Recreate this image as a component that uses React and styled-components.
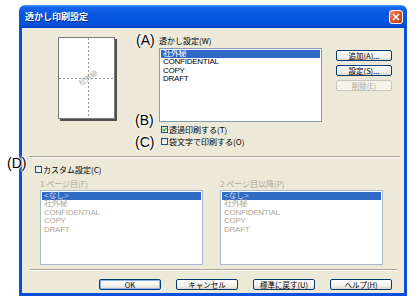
import React from "react";
import styled, { createGlobalStyle } from "styled-components";

const GlobalStyle = createGlobalStyle`
    body {
        margin: 0;
        background: #ffffff;
        font-family: "Liberation Sans", "Noto Sans CJK JP", sans-serif;
    }
`

const Window = styled.div`
    position: relative;
    margin: 5px 0 0 19px;
    width: 388px;
    height: 291px;
    display: flex;
    flex-direction: column;
`

const TitleBar = styled.div`
    height: 23px;
    flex: none;
    box-sizing: border-box;
    border-radius: 6px 6px 0 0;
    padding: 0 4px 0 6px;
    display: flex;
    align-items: center;
    justify-content: space-between;
    background: linear-gradient(to bottom, #4a96f8 0%, #1466ea 10%, #0757e0 40%, #0553dc 80%, #0443c4 100%);
    color: #ffffff;
    font-family: "Noto Sans CJK JP", sans-serif;
    font-size: 9px;
    font-weight: bold;
    text-shadow: 1px 1px 0 #0a2a8a;
`

const CloseButton = styled.div`
    width: 14px;
    height: 14px;
    box-sizing: border-box;
    border: 1px solid #ffffff;
    border-radius: 3px;
    background: linear-gradient(135deg, #f0906c 0%, #e3552b 45%, #c73a12 100%);
    display: flex;
    align-items: center;
    justify-content: center;
`

const Body = styled.div`
    flex: 1;
    display: flex;
    flex-direction: column;
    background: #ece9d8;
    border: 3px solid #0b4fdc;
    border-top: 0;
`

const Upper = styled.div`
    display: flex;
    padding: 7px 0 0 36px;
    height: 120px;
    box-sizing: border-box;
`

const Page = styled.div`
    width: 57px;
    height: 82px;
    margin-top: 2px;
    box-sizing: border-box;
    background: #ffffff;
    border: 1px solid #7a7a7a;
    box-shadow: 2px 2px 0 #505050;
    flex: none;
`

const Column = styled.div`
    display: flex;
    flex-direction: column;
    width: ${(p) => p.width || 163}px;
    margin-left: ${(p) => p.gap || 0}px;
`

const Label = styled.div`
    height: 12px;
    line-height: 12px;
    font-size: 8px;
    white-space: nowrap;
    color: ${(p) => (p.disabled ? "#aca899" : "#000000")};
    font-family: "Noto Sans CJK JP", sans-serif;
`

const ListBox = styled.div`
    height: ${(p) => p.h}px;
    box-sizing: border-box;
    border: 1px solid ${(p) => (p.disabled ? "#a7bad0" : "#7f9db9")};
    background: #ffffff;
    padding: 1px;
    overflow: hidden;
`

const Item = styled.div`
    height: 8.4px;
    line-height: 8.4px;
    font-size: 8px;
    letter-spacing: -0.25px;
    padding-left: 2px;
    white-space: nowrap;
    background: ${(p) => (p.selected ? "#316ac5" : "transparent")};
    color: ${(p) => (p.selected ? (p.disabled ? "#c9d6ee" : "#ffffff") : p.disabled ? "#aca899" : "#000000")};
`

const CheckRow = styled.label`
    display: flex;
    align-items: center;
    height: 12px;
    gap: 1px;
    font-size: 8px;
    font-family: "Noto Sans CJK JP", sans-serif;
    white-space: nowrap;
`

const CheckBox = styled.span`
    width: 7px;
    height: 7px;
    box-sizing: border-box;
    border: 1px solid #1c5180;
    background: linear-gradient(135deg, #dcdcd7 0%, #ffffff 100%);
    display: flex;
    align-items: center;
    justify-content: center;
    margin-left: ${(p) => p.offset || 0}px;
`

const ButtonColumn = styled.div`
    display: flex;
    flex-direction: column;
    gap: 4px;
    margin-left: 14px;
    padding-top: 15px;
`

const Button = styled.div`
    width: ${(p) => p.w}px;
    height: 11px;
    box-sizing: border-box;
    border: 1px solid ${(p) => (p.disabled ? "#c9c7ba" : "#003c74")};
    border-radius: 2px;
    background: ${(p) => (p.disabled ? "#f5f4ea" : "linear-gradient(to bottom, #ffffff 0%, #f4f3ee 60%, #dcd8cc 100%)")};
    box-shadow: ${(p) => (p.focus ? "inset 0 0 0 1px #8cb4f2" : "none")};
    color: ${(p) => (p.disabled ? "#aca899" : "#000000")};
    font-size: 7.5px;
    font-family: "Noto Sans CJK JP", sans-serif;
    display: flex;
    align-items: center;
    justify-content: center;
    white-space: nowrap;
`

const Separator = styled.div`
    margin: ${(p) => p.m};
    border-top: 1px solid #aca899;
    border-bottom: 1px solid #ffffff;
`

const Lower = styled.div`
    display: flex;
    flex-direction: column;
    padding-left: 13px;
    margin-top: 5px;
`

const ListsRow = styled.div`
    display: flex;
    gap: 17px;
    padding-left: 5px;
    margin-top: 3px;
`

const ButtonRow = styled.div`
    display: flex;
    justify-content: flex-end;
    gap: 15px;
    padding-right: 12px;
    margin-top: 8px;
`

const Mark = styled.div`
    position: absolute;
    left: ${(p) => p.x}px;
    top: ${(p) => p.y}px;
    font-family: "Liberation Sans", sans-serif;
    font-size: 14px;
    line-height: 14px;
    color: #000000;
    text-shadow: 0 0 2px #fff, 0 0 2px #fff, 0 0 3px #fff, 0 0 3px #fff;
`

const Check = () => (
    <svg width="5" height="5" viewBox="0 0 5 5">
        <path d="M0.6 2.4 L2 3.8 L4.4 0.9" fill="none" stroke="#21a121" strokeWidth="1.2" />
    </svg>
);

const watermarks = ["社外秘", "CONFIDENTIAL", "COPY", "DRAFT"];
const customList = ["<なし>", ...watermarks];

export default function App() {
    return (
        <>
            <GlobalStyle />
            <Window>
                <TitleBar>
                    <span>透かし印刷設定</span>
                    <CloseButton>
                        <svg width="8" height="8" viewBox="0 0 8 8">
                            <path d="M1 1 L7 7 M7 1 L1 7" stroke="#ffffff" strokeWidth="1.6" />
                        </svg>
                    </CloseButton>
                </TitleBar>
                <Body>
                    <Upper>
                        <Page>
                            <svg width="55" height="80" viewBox="0 0 55 80">
                                <line x1="29.5" y1="0" x2="29.5" y2="80" stroke="#9a9a9a" strokeDasharray="2 2" />
                                <line x1="0" y1="40.5" x2="55" y2="40.5" stroke="#9a9a9a" strokeDasharray="2 2" />
                                <text x="29" y="42.5" fontSize="7" fill="#a8a8a8" textAnchor="middle" transform="rotate(-35 29 40)" fontFamily="Noto Sans CJK JP">社外秘</text>
                            </svg>
                        </Page>
                        <Column gap={44}>
                            <Label>透かし設定(W)</Label>
                            <ListBox h={74} style={{ marginTop: 1 }}>
                                {watermarks.map((w, i) => (
                                    <Item key={w} selected={i === 0}>{w}</Item>
                                ))}
                            </ListBox>
                            <div style={{ marginTop: 1 }}>
                                <CheckRow>
                                    <CheckBox offset={2}><Check /></CheckBox>
                                    透過印刷する(T)
                                </CheckRow>
                                <CheckRow>
                                    <CheckBox offset={2} />
                                    袋文字で印刷する(O)
                                </CheckRow>
                            </div>
                        </Column>
                        <ButtonColumn>
                            <Button w={56}>追加(A)...</Button>
                            <Button w={56}>設定(S)...</Button>
                            <Button w={56} disabled>削除(E)</Button>
                        </ButtonColumn>
                    </Upper>
                    <Separator m="8px 4px 0 7px" />
                    <Lower>
                        <CheckRow>
                            <CheckBox />
                            カスタム設定(C)
                        </CheckRow>
                        <ListsRow>
                            <Column>
                                <Label disabled>1 ページ目(F)</Label>
                                <ListBox h={75} disabled>
                                    {customList.map((w, i) => (
                                        <Item key={w} selected={i === 0} disabled>{w}</Item>
                                    ))}
                                </ListBox>
                            </Column>
                            <Column>
                                <Label disabled>2 ページ目以降(P)</Label>
                                <ListBox h={75} disabled>
                                    {customList.map((w, i) => (
                                        <Item key={w} selected={i === 0} disabled>{w}</Item>
                                    ))}
                                </ListBox>
                            </Column>
                        </ListsRow>
                    </Lower>
                    <Separator m="4px 7px 0 8px" />
                    <ButtonRow>
                        <Button w={62} focus>OK</Button>
                        <Button w={62}>キャンセル</Button>
                        <Button w={62}>標準に戻す(U)</Button>
                        <Button w={62}>ヘルプ(H)</Button>
                    </ButtonRow>
                </Body>
                <Mark x={117} y={28}>(A)</Mark>
                <Mark x={116} y={108}>(B)</Mark>
                <Mark x={116} y={130}>(C)</Mark>
                <Mark x={-12} y={151}>(D)</Mark>
            </Window>
        </>
    );
}
